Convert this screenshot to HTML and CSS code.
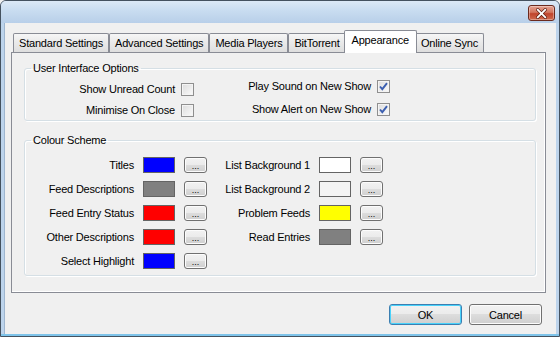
FILE: index.html
```html
<!DOCTYPE html>
<html lang="en">
<head>
    <meta charset="UTF-8">
    <title>Options</title>
    <link rel="stylesheet" href="styles.css">
</head>
<body>
    <div class="window">
        <div class="titlebar">
            <button class="close-btn" title="Close">
                <svg width="26" height="15" viewBox="0 0 26 15">
                    <path d="M9 3.5 L17 11.5 M17 3.5 L9 11.5" stroke="#5a1d12" stroke-width="3.4" stroke-linecap="round"/>
                    <path d="M9 3.5 L17 11.5 M17 3.5 L9 11.5" stroke="#fff" stroke-width="2" stroke-linecap="round"/>
                </svg>
            </button>
        </div>
        <div class="client">
            <div class="tabs">
                <div class="tab">Standard Settings</div>
                <div class="tab">Advanced Settings</div>
                <div class="tab">Media Players</div>
                <div class="tab">BitTorrent</div>
                <div class="tab active">Appearance</div>
                <div class="tab">Online Sync</div>
            </div>
            <div class="panel">
                <fieldset class="group group-ui">
                    <legend>User Interface Options</legend>
                    <div class="opt-cols">
                        <div class="opt-col">
                            <span class="opt-label">Show Unread Count</span>
                            <span class="check"></span>
                            <span class="opt-label">Minimise On Close</span>
                            <span class="check"></span>
                        </div>
                        <div class="opt-col opt-col-right">
                            <span class="opt-label">Play Sound on New Show</span>
                            <span class="check checked">
                                <svg width="11" height="11" viewBox="0 0 11 11"><path d="M2 5.5 L4.3 8.2 L9 2.2" fill="none" stroke="#3c5fb0" stroke-width="1.9"/></svg>
                            </span>
                            <span class="opt-label">Show Alert on New Show</span>
                            <span class="check checked">
                                <svg width="11" height="11" viewBox="0 0 11 11"><path d="M2 5.5 L4.3 8.2 L9 2.2" fill="none" stroke="#3c5fb0" stroke-width="1.9"/></svg>
                            </span>
                        </div>
                    </div>
                </fieldset>

                <fieldset class="group group-colours">
                    <legend>Colour Scheme</legend>
                    <div class="colour-grid">
                        <span class="colour-label">Titles</span>
                        <span class="swatch swatch-blue"></span>
                        <button class="pick">...</button>
                        <span class="colour-label">List Background 1</span>
                        <span class="swatch swatch-white"></span>
                        <button class="pick">...</button>

                        <span class="colour-label">Feed Descriptions</span>
                        <span class="swatch swatch-grey"></span>
                        <button class="pick">...</button>
                        <span class="colour-label">List Background 2</span>
                        <span class="swatch swatch-light"></span>
                        <button class="pick">...</button>

                        <span class="colour-label">Feed Entry Status</span>
                        <span class="swatch swatch-red"></span>
                        <button class="pick">...</button>
                        <span class="colour-label">Problem Feeds</span>
                        <span class="swatch swatch-yellow"></span>
                        <button class="pick">...</button>

                        <span class="colour-label">Other Descriptions</span>
                        <span class="swatch swatch-red"></span>
                        <button class="pick">...</button>
                        <span class="colour-label">Read Entries</span>
                        <span class="swatch swatch-grey"></span>
                        <button class="pick">...</button>

                        <span class="colour-label">Select Highlight</span>
                        <span class="swatch swatch-blue"></span>
                        <button class="pick">...</button>
                    </div>
                </fieldset>
            </div>
            <div class="actions">
                <button class="btn btn-default">OK</button>
                <button class="btn">Cancel</button>
            </div>
        </div>
    </div>
</body>
</html>
```

FILE: styles.css
```css
body {
    margin: 0;
    font-family: 'Liberation Sans', Arial, sans-serif;
    font-size: 11px;
    letter-spacing: -0.2px;
    color: #000;
    background: #f0f0f0;
}
.window {
    width: 560px;
    height: 337px;
    box-sizing: border-box;
    border: 1px solid #45525f;
    border-radius: 6px 6px 0 0;
    padding: 0 3px 3px 3px;
    background: #bdd4ec;
    box-shadow: inset 0 -2px 0 #7fc4ea;
    overflow: hidden;
}
.titlebar {
    height: 22px;
    margin: 0 -3px;
    background: linear-gradient(#dce9f6, #c8dcf0 45%, #b8cfe9);
    display: flex;
    justify-content: flex-end;
    align-items: flex-start;
    padding-right: 4px;
}
.close-btn {
    width: 27px;
    height: 16px;
    margin-top: 4px;
    padding: 0;
    border: 1px solid #6b2a1e;
    border-radius: 3px;
    background: linear-gradient(#e6a291, #d2765f 45%, #c0442c 55%, #cf6b4f);
    box-shadow: inset 0 0 0 1px rgba(255,255,255,0.35);
    display: flex;
    align-items: center;
    justify-content: center;
}
.client {
    height: 311px;
    box-sizing: border-box;
    background: #f0f0f0;
    padding: 7px 0 0 0;
    border-left: 1px solid #9fb6cf;
}
.tabs {
    display: flex;
    align-items: flex-end;
    height: 22px;
    margin-left: 8px;
    position: relative;
    z-index: 1;
}
.tab {
    height: 19px;
    box-sizing: border-box;
    padding: 0 5px;
    border: 1px solid #898c95;
    border-bottom: none;
    border-radius: 2px 2px 0 0;
    line-height: 18px;
    white-space: nowrap;
    background: linear-gradient(#f6f6f6, #e9e9e9 50%, #dedede);
}
.tab.active {
    height: 23px;
    margin: 0 -2px -1px -2px;
    padding: 0 7px;
    line-height: 19px;
    background: #fff;
    position: relative;
    z-index: 2;
}
.panel {
    width: 535px;
    height: 241px;
    box-sizing: border-box;
    margin-left: 6px;
    border: 1px solid #898c95;
    box-shadow: inset -1px -1px 0 #fff;
    padding-top: 8px;
}
.group {
    margin: 0 9px 0 12px;
    padding: 0;
    min-width: 0;
    border: 1px solid #d5dfe5;
    border-radius: 3px;
    box-shadow: inset 1px 1px 0 #fff, 1px 1px 0 #fff;
}
.group legend {
    margin-left: 6px;
    padding: 0 2px;
    line-height: 14px;
}
.group-colours {
    margin-top: 12px;
}
.opt-cols {
    display: flex;
    padding: 8px 0 3px 0;
}
.opt-col {
    display: grid;
    grid-template-columns: 150px 13px;
    grid-auto-rows: 13px;
    column-gap: 6px;
    row-gap: 8px;
}
.opt-col-right {
    grid-template-columns: 171px 13px;
    margin: -3px 0 0 6px;
    row-gap: 10px;
}
.opt-label, .colour-label {
    text-align: right;
    white-space: nowrap;
    align-self: center;
    line-height: 13px;
}
.check {
    width: 13px;
    height: 13px;
    box-sizing: border-box;
    border: 1px solid #8f8f8f;
    background: linear-gradient(135deg, #dcdcdc, #fbfbfb);
    box-shadow: inset 0 0 0 1px #f4f4f4;
    display: flex;
    align-items: center;
    justify-content: center;
}
.colour-grid {
    display: grid;
    grid-template-columns: 109px 32px 23px 94px 32px 23px;
    grid-auto-rows: 16px;
    column-gap: 9px;
    row-gap: 8px;
    padding: 10px 0 6px 0;
}
.swatch {
    box-sizing: border-box;
    border: 1px solid #646464;
}
.swatch-blue { background: #0000ff; }
.swatch-grey { background: #808080; }
.swatch-red { background: #ff0000; }
.swatch-white { background: #ffffff; }
.swatch-light { background: #f4f4f4; }
.swatch-yellow { background: #ffff00; }
.pick {
    width: 23px;
    height: 16px;
    padding: 0;
    border: 1px solid #707070;
    border-radius: 3px;
    background: linear-gradient(#f2f2f2, #ebebeb 50%, #dddddd 50%, #cfcfcf);
    box-shadow: inset 0 0 0 1px #fcfcfc;
    font-family: 'Liberation Sans', Arial, sans-serif;
    font-size: 9px;
    line-height: 17px;
    letter-spacing: 0;
    color: #000;
}
.actions {
    display: flex;
    justify-content: flex-end;
    gap: 7px;
    margin-top: 11px;
    padding-right: 14px;
}
.btn {
    width: 73px;
    height: 21px;
    padding: 0;
    border: 1px solid #707070;
    border-radius: 3px;
    background: linear-gradient(#f2f2f2, #ebebeb 50%, #dddddd 50%, #cfcfcf);
    box-shadow: inset 0 0 0 1px #fcfcfc;
    font-family: 'Liberation Sans', Arial, sans-serif;
    font-size: 11px;
    letter-spacing: -0.2px;
    color: #000;
}
.btn-default {
    border-color: #3c7fb1;
    box-shadow: inset 0 0 0 1px #48d2fb;
}
```
